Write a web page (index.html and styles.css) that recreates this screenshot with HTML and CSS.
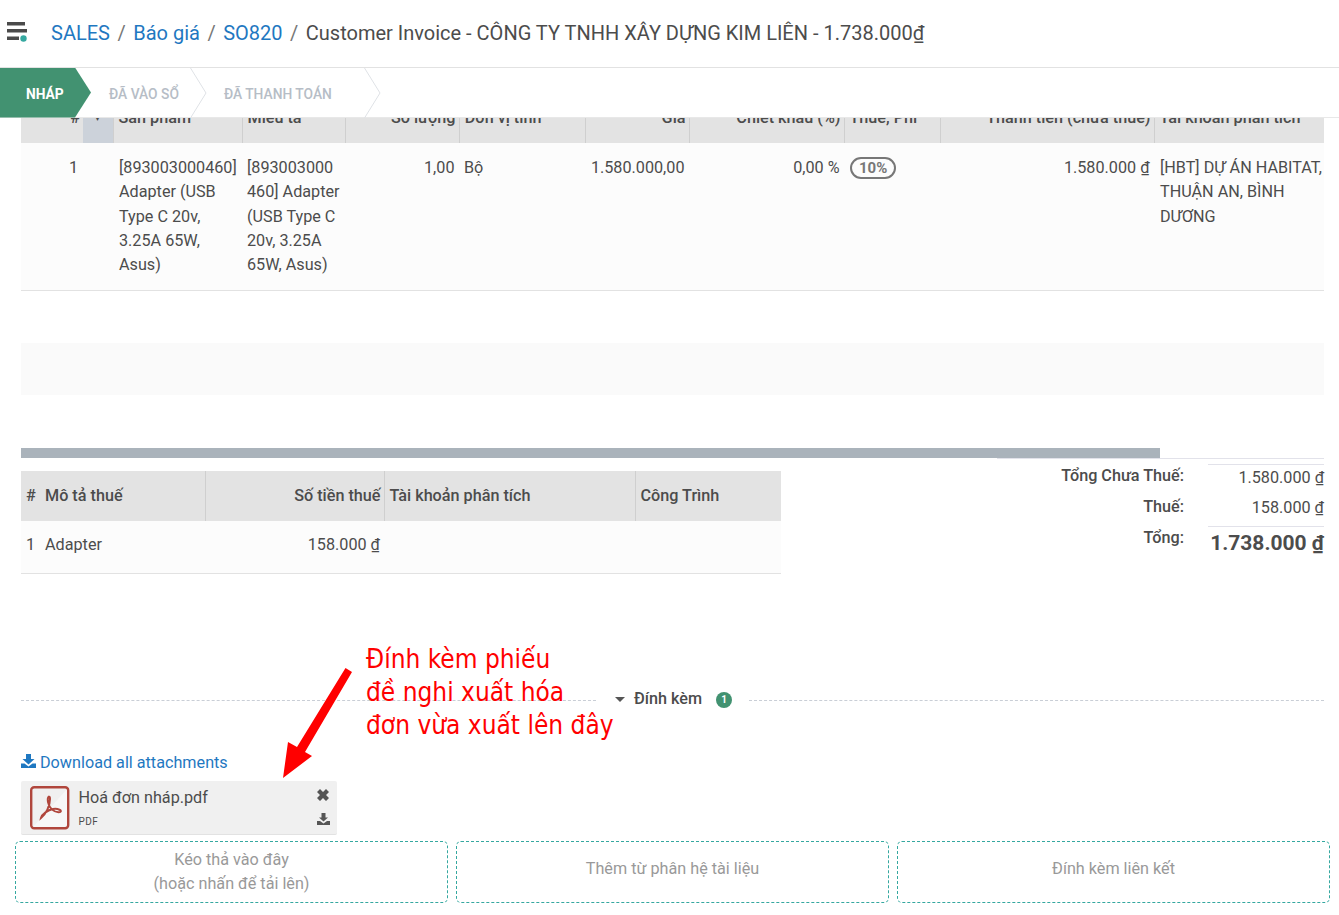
FILE: index.html
```html
<!DOCTYPE html>
<html lang="vi">
<head>
	<meta charset="UTF-8">
	<title>Customer Invoice</title>
	<link rel="stylesheet" href="styles.css">
</head>
<body>
	<div id="topbar">
		<svg class="menu-icon" width="28" height="24" viewBox="0 0 28 24">
			<rect x="7" y="4" width="18" height="3.5" fill="#4a4a4a"/>
			<rect x="7" y="11" width="20" height="3.5" fill="#4a4a4a"/>
			<rect x="7" y="18.5" width="12" height="3.5" fill="#4a4a4a"/>
			<circle cx="23.5" cy="20.5" r="3.2" fill="#35a8a0"/>
		</svg>
		<ol id="crumbs">
			<li><a href="#">SALES</a></li>
			<li><a href="#">Báo giá</a></li>
			<li><a href="#">SO820</a></li>
			<li class="current">Customer Invoice - CÔNG TY TNHH XÂY DỰNG KIM LIÊN - 1.738.000₫</li>
		</ol>
	</div>

	<div id="status">
		<span class="step selected">NHÁP</span>
		<span class="step step-posted">ĐÃ VÀO SỔ</span>
		<svg class="chevron" width="17" height="50" viewBox="0 0 17 50"><path d="M0.5 0 L16 25 L0.5 50" fill="none" stroke="#dfe2e6"/></svg>
		<span class="step step-paid">ĐÃ THANH TOÁN</span>
		<svg class="chevron" width="17" height="50" viewBox="0 0 17 50"><path d="M0.5 0 L16 25 L0.5 50" fill="none" stroke="#dfe2e6"/></svg>
	</div>

	<div id="content">
		<table id="lines">
			<colgroup>
				<col class="c62"><col class="c30"><col class="c129"><col class="c103"><col class="c114"><col class="c126"><col class="c104"><col class="c155"><col class="c96"><col class="c214"><col class="c170">
			</colgroup>
			<thead>
				<tr>
					<th class="num">#</th>
					<th class="handle">▾</th>
					<th>Sản phẩm</th>
					<th>Miêu tả</th>
					<th class="num">Số lượng</th>
					<th>Đơn vị tính</th>
					<th class="num">Giá</th>
					<th class="num">Chiết khấu (%)</th>
					<th>Thuế, Phí</th>
					<th class="num">Thành tiền (chưa thuế)</th>
					<th>Tài khoản phân tích</th>
				</tr>
			</thead>
			<tbody>
				<tr class="filled">
					<td class="index">1</td>
					<td></td>
					<td class="product">[893003000460] Adapter (USB Type C 20v, 3.25A 65W, Asus)</td>
					<td>[893003000 460] Adapter (USB Type C 20v, 3.25A 65W, Asus)</td>
					<td class="num">1,00</td>
					<td>Bộ</td>
					<td class="num">1.580.000,00</td>
					<td class="num">0,00 %</td>
					<td><span class="tag">10%</span></td>
					<td class="num">1.580.000 ₫</td>
					<td class="account">[HBT] DỰ ÁN HABITAT, THUẬN AN, BÌNH DƯƠNG</td>
				</tr>
			</tbody>
		</table>
		<div class="empty-row"></div>
		<div class="empty-row shaded"></div>
		<div class="empty-row last"></div>
		<div id="scrollbar"></div>

		<div id="summary">
			<table id="taxes">
				<colgroup>
					<col class="t184"><col class="t179"><col class="t251"><col class="t146">
				</colgroup>
				<thead>
					<tr>
						<th><span class="hash">#</span>Mô tả thuế</th>
						<th class="num">Số tiền thuế</th>
						<th>Tài khoản phân tích</th>
						<th>Công Trình</th>
					</tr>
				</thead>
				<tbody>
					<tr>
						<td><span class="hash">1</span>Adapter</td>
						<td class="num">158.000 ₫</td>
						<td></td>
						<td></td>
					</tr>
				</tbody>
			</table>
			<div id="totals">
				<div class="label">Tổng Chưa Thuế:</div>
				<div class="value first">1.580.000 ₫</div>
				<div class="label">Thuế:</div>
				<div class="value">158.000 ₫</div>
				<div class="label">Tổng:</div>
				<div class="value grand">1.738.000 ₫</div>
			</div>
		</div>

		<div id="attach-title">
			<span class="dash"></span>
			<span class="caret"></span>
			<span class="attach-name">Đính kèm</span>
			<span class="badge">1</span>
			<span class="dash"></span>
		</div>

		<a id="download-all" href="#">
			<svg width="15" height="14" viewBox="0 0 15 14">
				<path d="M5 0h5v5h3.500L7.500 10.500 1.500 5H5z M0 9.500h3.500L7.500 12.500l4-3H15V14H0z" fill="#1f78c1"/>
			</svg>Download all attachments
		</a>

		<div id="file">
			<div class="pdf-icon">
				<svg width="40" height="44" viewBox="0 0 40 44">
					<rect x="1" y="1" width="38" height="42" rx="3" fill="#f0f0f0"/>
					<path d="M2 42 L38 2 V42 Z" fill="#f7f7f7"/>
					<rect x="1.200" y="1.200" width="37" height="41" rx="3" fill="none" stroke="#b0463c" stroke-width="2.400"/>
					<path d="M11 32 C16 28 20 20 20 13 C20 9 17 10 18 16 C19 22 24 27 30 26 C33 25 28 22 23 23 C18 24 12 28 11 32 Z" fill="none" stroke="#b0463c" stroke-width="2"/>
				</svg>
			</div>
			<div class="file-text">
				<div class="file-name">Hoá đơn nháp.pdf</div>
				<div class="file-type">PDF</div>
			</div>
			<div class="file-actions">
				<svg width="12" height="12" viewBox="0 0 12 12"><path d="M0 3 L3 0 L6 3 L9 0 L12 3 L9 6 L12 9 L9 12 L6 9 L3 12 L0 9 L3 6 Z" fill="#555"/></svg>
				<svg width="13" height="12" viewBox="0 0 13 12"><path d="M4.500 0h4v4.500h2.500L6.500 8.500 2 4.500h2.500z M0 8h3L6.500 10.500 10 8h3v4H0z" fill="#555"/></svg>
			</div>
		</div>

		<div id="drops">
			<div class="drop">Kéo thả vào đây<br>(hoặc nhấn để tải lên)</div>
			<div class="drop single">Thêm từ phân hệ tài liệu</div>
			<div class="drop single">Đính kèm liên kết</div>
		</div>
	</div>

	<div id="note">Đính kèm phiếu<br>đề nghi xuất hóa<br>đơn vừa xuất lên đây</div>
	<svg id="arrow" width="72" height="114" viewBox="0 0 72 114">
		<polygon points="63.500,1 70,5 23,85 30,89 1,111 6,75 15,80" fill="#ff0000"/>
	</svg>
</body>
</html>
```

FILE: styles.css
```css
*{
	margin: 0;
	padding: 0;
	box-sizing: border-box;
}
html, body{
	height: 915px;
	overflow: hidden;
}
body{
	position: relative;
	background: #fff;
	color: #4c4c4c;
	font-family: Roboto, "Noto Sans", sans-serif;
	font-size: 16.2px;
	line-height: 24.3px;
}
a{
	color: #1f78c1;
	text-decoration: none;
}
ol{
	list-style: none;
}

/* top bar */
#topbar{
	height: 68px;
	display: flex;
	align-items: center;
	border-bottom: 1px solid #e2e2e2;
}
.menu-icon{
	margin-top: -7px;
}
#crumbs{
	display: flex;
	margin-left: 23px;
	margin-top: -1px;
	font-size: 20px;
	line-height: 26px;
}
#crumbs li + li::before{
	content: "/";
	color: #777;
	margin: 0 7.5px;
}

/* status */
#status{
	height: 50px;
	display: flex;
	align-items: center;
	border-bottom: 1px solid #e8e8e8;
	font-size: 13.8px;
	font-weight: 500;
	color: #b6bdc6;
}
.step{
	padding-top: 4px;
}
.step.selected{
	width: 91px;
	height: 50px;
	padding: 0 0 0 26px;
	line-height: 53px;
	background: #429271;
	color: #fff;
	font-weight: 700;
	clip-path: polygon(0 0, 75px 0, 91px 25px, 75px 50px, 0 50px);
}
.step-posted{
	margin-left: 18px;
	margin-right: 11px;
}
.step-paid{
	margin-left: 17px;
	margin-right: 32px;
}

/* lines */
#content{
	height: 797px;
	overflow: hidden;
	padding: 0 15px 0 21px;
}
table{
	border-collapse: collapse;
	table-layout: fixed;
	width: 100%;
}
#lines{
	margin-top: -24px;
}
.c62{ width: 62px; }
.c30{ width: 30px; }
.c129{ width: 129px; }
.c103{ width: 103px; }
.c114{ width: 114px; }
.c126{ width: 126px; }
.c104{ width: 104px; }
.c155{ width: 155px; }
.c96{ width: 96px; }
.c214{ width: 214px; }
.c170{ width: 170px; }
th{
	height: 49px;
	padding: 0 5px;
	background: #e3e3e3;
	border-left: 1px solid #cfcfcf;
	font-weight: 500;
	text-align: left;
	white-space: nowrap;
	overflow: hidden;
}
th:first-child{
	border-left: 0;
}
th.num{
	padding-right: 3px;
}
th.handle{
	background: #ccd2da;
	border-left: 0;
	text-align: center;
	font-size: 10px;
}
.num{
	text-align: right;
}
#lines td{
	padding: 13px 4px 12px 5px;
	vertical-align: top;
	background: #fcfcfc;
	word-wrap: break-word;
}
#lines td.num{
	padding-right: 4.5px;
}
#lines td.index{
	padding-right: 5px;
	padding-left: 48px;
}
#lines td.product{
	padding-left: 6px;
}
#lines td.account{
	padding: 13px 0 12px 6px;
}
.filled{
	height: 147px;
	border-bottom: 1px solid #e2e2e2;
}
.tag{
	display: inline-block;
	height: 22px;
	margin: 1px 0 0 1px;
	padding: 0 7px;
	border: 2px solid #777;
	border-radius: 11px;
	font-size: 15px;
	font-weight: 700;
	line-height: 18px;
	color: #777;
	vertical-align: top;
}
.empty-row{
	height: 52px;
}
.empty-row.last{
	height: 53px;
}
.shaded{
	background: #fafafa;
}
#scrollbar{
	width: 1139px;
	height: 10px;
	background: #aab3bb;
}

/* taxes and totals */
#summary{
	display: flex;
	justify-content: space-between;
	align-items: flex-start;
}
#taxes{
	width: 760px;
	margin-top: 13px;
}
#taxes th{
	height: 50px;
	padding-top: 2px;
}
.t184{ width: 184px; }
.t179{ width: 179px; }
.t251{ width: 251px; }
.t146{ width: 146px; }
#taxes td{
	height: 53px;
	padding: 0 4px 4px 5px;
	background: #fcfcfc;
	border-bottom: 1px solid #e2e2e2;
}
.hash{
	display: inline-block;
	width: 19px;
}
#totals{
	width: 327px;
	border-top: 1px solid #e2e2ea;
	padding-top: 5px;
	display: grid;
	grid-template-columns: 1fr 116px;
	column-gap: 24px;
	text-align: right;
}
#totals .label{
	font-weight: 500;
	height: 31px;
	line-height: 24px;
}
.value{
	height: 31px;
	padding-top: 1px;
}
.value.first{
	border-top: 1px solid #e2e2ea;
}
.value.grand{
	border-top: 1px solid #e2e2ea;
	padding-top: 2px;
	font-size: 21px;
	font-weight: 700;
	line-height: 28px;
	height: 38px;
	white-space: nowrap;
}

/* attachments */
#attach-title{
	display: flex;
	align-items: center;
	margin-top: 113px;
	height: 24px;
	font-weight: 500;
}
.dash{
	flex: 1;
	border-top: 1px dashed #c9ced6;
	margin-top: 2px;
}
.caret{
	margin-left: 19px;
	border-top: 5px solid #555;
	border-left: 5px solid transparent;
	border-right: 5px solid transparent;
}
.attach-name{
	margin-left: 9px;
}
.badge{
	width: 16px;
	height: 16px;
	margin: 2px 17px 0 14px;
	border-radius: 50%;
	background: #429271;
	color: #fff;
	font-size: 10px;
	line-height: 16px;
	text-align: center;
	font-weight: 700;
}
#download-all{
	display: block;
	margin-top: 40px;
	height: 24px;
}
#download-all svg{
	margin-right: 4px;
}
#file{
	width: 316px;
	height: 54px;
	margin-top: 6px;
	display: flex;
	background: #f0f0f0;
	border-bottom: 1px solid #e2e2e2;
	border-radius: 2px;
}
.pdf-icon{
	margin: 5px 8.5px 0 9px;
	height: 44px;
}
.file-text{
	flex: 1;
}
.file-name{
	margin-top: 5px;
}
.file-type{
	font-size: 10px;
	line-height: 14px;
	margin-top: 5px;
	letter-spacing: 0.5px;
}
.file-actions{
	width: 20px;
	display: flex;
	flex-direction: column;
	gap: 12px;
	padding-top: 8px;
}
#drops{
	display: grid;
	grid-template-columns: repeat(3, 1fr);
	gap: 8px;
	margin: 6px -6px 0;
}
.drop{
	height: 62px;
	display: flex;
	align-items: center;
	justify-content: center;
	text-align: center;
	border: 1px dashed #35a8a0;
	border-radius: 5px;
	color: #999;
}
.drop.single{
	padding-bottom: 5px;
}

/* note drawn over the screenshot */
#note{
	position: absolute;
	left: 366px;
	top: 643px;
	color: #f00;
	font-family: "DejaVu Sans Condensed", "DejaVu Sans", sans-serif;
	font-stretch: condensed;
	font-size: 26px;
	line-height: 33px;
	white-space: nowrap;
}
#arrow{
	position: absolute;
	left: 282px;
	top: 667px;
}
```
